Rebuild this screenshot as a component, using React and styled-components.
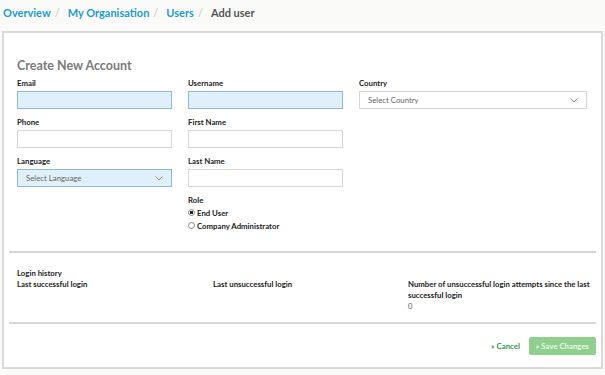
import React from "react";
import styled, { createGlobalStyle } from "styled-components";

const GlobalStyle = createGlobalStyle`
  body {
    margin: 0;
    background: #fafaf8;
    font-family: Lato, "Open Sans", sans-serif;
    color: #333;
  }
`;

function Chevron() {
  return (
    <svg width="8" height="5" viewBox="0 0 8 5">
      <path d="M0.5 0.5 L4 4 L7.5 0.5" fill="none" stroke="#888" strokeWidth="0.9" />
    </svg>
  );
}

function App() {
  return (
    <Page>
      <GlobalStyle />
      <Breadcrumb>
        <Crumb>Overview</Crumb>
        <Slash>/</Slash>
        <Crumb>My Organisation</Crumb>
        <Slash>/</Slash>
        <Crumb>Users</Crumb>
        <Slash>/</Slash>
        <Crumb current>Add user</Crumb>
      </Breadcrumb>

      <Card>
        <Section>
          <Title>Create New Account</Title>
          <FormGrid>
            <Column>
              <Field>
                <Label>Email</Label>
                <Input highlight />
              </Field>
              <Field>
                <Label>Phone</Label>
                <Input />
              </Field>
              <Field>
                <Label>Language</Label>
                <Select highlight>
                  <span>Select Language</span>
                  <Chevron />
                </Select>
              </Field>
            </Column>
            <Column>
              <Field>
                <Label>Username</Label>
                <Input highlight />
              </Field>
              <Field>
                <Label>First Name</Label>
                <Input />
              </Field>
              <Field>
                <Label>Last Name</Label>
                <Input />
              </Field>
              <Field>
                <Label>Role</Label>
                <RadioList>
                  <RadioRow>
                    <Radio checked />
                    End User
                  </RadioRow>
                  <RadioRow>
                    <Radio />
                    Company Administrator
                  </RadioRow>
                </RadioList>
              </Field>
            </Column>
            <Column>
              <Field>
                <Label>Country</Label>
                <Select>
                  <span>Select Country</span>
                  <Chevron />
                </Select>
              </Field>
            </Column>
          </FormGrid>
        </Section>

        <Divider />

        <LoginSection>
          <Label>Login history</Label>
          <LoginGrid>
            <Label>Last successful login</Label>
            <Label>Last unsuccessful login</Label>
            <div>
              <Label>Number of unsuccessful login attempts since the last successful login</Label>
              <Value>0</Value>
            </div>
          </LoginGrid>
        </LoginSection>

        <Divider />

        <Footer>
          <CancelLink>» Cancel</CancelLink>
          <SaveButton>» Save Changes</SaveButton>
        </Footer>
      </Card>
    </Page>
  );
}

export default App;

const Page = styled.div`
  width: 605px;
  height: 375px;
  box-sizing: border-box;
  padding: 0 2px;
  overflow: hidden;
`;

const Breadcrumb = styled.div`
  display: flex;
  align-items: center;
  height: 25px;
  padding-left: 1px;
  font-size: 11px;
  font-weight: 700;
`;

const Crumb = styled.span`
  color: ${(p) => (p.current ? "#555" : "#1a9cd5")};
`;

const Slash = styled.span`
  color: #c4c4c4;
  font-weight: 400;
  margin: 0 8px 0 4px;
`;

const Card = styled.div`
  margin-top: 6px;
  height: 338px;
  box-sizing: border-box;
  background: #fff;
  border: 2px solid #d9d9d9;
  padding: 0 5px;
`;

const Section = styled.div`
  padding: 24px 7px 0 8px;
  height: 218px;
  box-sizing: border-box;
`;

const Title = styled.h2`
  margin: 0 0 3px 0;
  font-size: 12.5px;
  font-weight: 700;
  color: #7a7a7a;
  line-height: 18px;
`;

const FormGrid = styled.div`
  display: grid;
  grid-template-columns: 155px 155px 228px;
  column-gap: 16px;
`;

const Column = styled.div`
  display: flex;
  flex-direction: column;
  gap: 8px;
`;

const Field = styled.div`
  display: flex;
  flex-direction: column;
  gap: 2px;
`;

const Label = styled.div`
  font-size: 7.8px;
  font-weight: 700;
  color: #222;
  line-height: 11px;
`;

const Input = styled.div`
  height: 18px;
  box-sizing: border-box;
  border: 1px solid ${(p) => (p.highlight ? "#8fb9cf" : "#d6d6d6")};
  background: ${(p) => (p.highlight ? "#dff0fb" : "#fff")};
`;

const Select = styled(Input)`
  display: flex;
  align-items: center;
  justify-content: space-between;
  padding: 0 8px;
  font-size: 7.8px;
  color: #666;
`;

const RadioList = styled.div`
  display: flex;
  flex-direction: column;
  margin-top: -1px;
`;

const RadioRow = styled.div`
  display: flex;
  align-items: center;
  gap: 2px;
  font-size: 7.8px;
  font-weight: 700;
  color: #222;
  line-height: 13px;
`;

const Radio = styled.span`
  width: 7px;
  height: 7px;
  box-sizing: border-box;
  border-radius: 50%;
  border: 1px solid #888;
  background: ${(p) => (p.checked ? "radial-gradient(circle, #222 0 1.6px, #fff 2px)" : "#fff")};
  margin-top: -3px;
`;

const Divider = styled.hr`
  margin: 0;
  border: none;
  border-top: 2px solid #d6d6d6;
`;

const LoginSection = styled.div`
  padding: 15px 7px 0 8px;
  height: 69px;
  box-sizing: border-box;
`;

const LoginGrid = styled.div`
  display: grid;
  grid-template-columns: 196px 195px 184px;
`;

const Value = styled.div`
  font-size: 7.5px;
  color: #555;
  margin-top: 1px;
`;

const Footer = styled.div`
  display: flex;
  align-items: center;
  justify-content: flex-end;
  gap: 9px;
  padding: 13px 0 0 0;
`;

const CancelLink = styled.span`
  font-size: 7.8px;
  font-weight: 700;
  color: #2e9a4a;
`;

const SaveButton = styled.span`
  display: inline-flex;
  align-items: center;
  height: 18px;
  padding: 0 7px;
  background: #8fd08f;
  border-radius: 2px;
  color: #e8f7e8;
  font-size: 7.8px;
  font-weight: 700;
`;
